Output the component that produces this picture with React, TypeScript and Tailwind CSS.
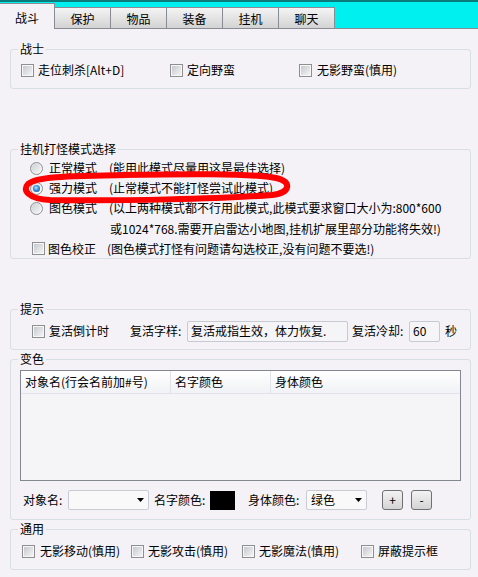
import React from 'react';

function CheckBox() {
  return (
    <span className="flex h-[13px] w-[13px] shrink-0 items-center justify-center border border-[#8e8f8f] bg-[#f7f7f7]">
      <span className="h-[9px] w-[9px] bg-linear-to-br from-[#c6c9ce] to-[#f4f4f4]" />
    </span>
  );
}

function Radio({ checked = false }: { checked?: boolean }) {
  return (
    <span className="flex h-[13px] w-[13px] shrink-0 items-center justify-center rounded-full border border-[#8e8f8f] bg-linear-to-br from-[#d9dadc] to-[#ffffff]">
      {checked ? (
        <span className="h-[7px] w-[7px] rounded-full bg-[radial-gradient(circle_at_45%_40%,#b8e4ff_0%,#3d8fd8_45%,#133e73_100%)]" />
      ) : (
        <span className="h-[9px] w-[9px] rounded-full bg-linear-to-br from-[#cfd1d4] to-[#f7f7f7]" />
      )}
    </span>
  );
}

function Tab({ label }: { label: string }) {
  return (
    <div className="flex h-[21px] w-[56px] items-center justify-center border-t border-r border-[#898c95] bg-linear-to-b from-[#f4f4f4] to-[#d3d3d3] pt-px">
      {label}
    </div>
  );
}

function Group({ title, className, children }: { title: string; className: string; children: React.ReactNode }) {
  return (
    <fieldset className={`ml-[10px] w-[461px] rounded-[3px] border border-[#d5dfe5] ${className}`}>
      <legend className="ml-[7px] px-[2px] leading-[16px]">{title}</legend>
      {children}
    </fieldset>
  );
}

function Combo({ w, value }: { w: string; value?: string }) {
  return (
    <div className={`flex h-[20px] ${w} items-center justify-between rounded-[2px] border border-[#c9ccd2] bg-[#f9f9fa] pl-[4px] pr-[4px]`}>
      <span>{value}</span>
      <svg width="7" height="4" viewBox="0 0 7 4">
        <path d="M0 0h7L3.5 4z" fill="#000" />
      </svg>
    </div>
  );
}

function SmallButton({ label }: { label: string }) {
  return (
    <div className="flex h-[20px] w-[21px] items-center justify-center rounded-[3px] border border-[#707070] bg-linear-to-b from-[#f3f3f3] to-[#d4d4d4]">
      {label}
    </div>
  );
}

export default function App() {
  return (
    <div className="relative h-[577px] w-[478px] overflow-hidden bg-[#f4f2f6] font-['Noto_Sans_CJK_SC',sans-serif] text-[12px] leading-[16px] text-black">
      <div className="flex h-[29px] items-end border-t-2 border-b border-t-[#0b7b7b] border-b-[#898c95] bg-[#00f0f0]">
        <div className="relative z-10 -mb-px flex h-[26px] w-[55px] items-center justify-center border-t border-r border-[#898c95] bg-[#f4f2f6] pt-[2px]">
          战斗
        </div>
        <Tab label="保护" />
        <Tab label="物品" />
        <Tab label="装备" />
        <Tab label="挂机" />
        <Tab label="聊天" />
      </div>

      <Group title="战士" className="mt-[12px] h-[48px]">
        <div className="flex h-[20px] items-center pl-[10px] mt-[3px]">
          <div className="flex w-[149px] items-center gap-[4px]">
            <CheckBox />
            <span>走位刺杀[Alt+D]</span>
          </div>
          <div className="flex w-[129px] items-center gap-[4px]">
            <CheckBox />
            <span>定向野蛮</span>
          </div>
          <div className="flex items-center gap-[5px]">
            <CheckBox />
            <span>无影野蛮(慎用)</span>
          </div>
        </div>
      </Group>

      <Group title="挂机打怪模式选择" className="mt-[52px] h-[118px]">
        <div className="pt-px">
          <div className="flex h-[20px] items-center pl-[19px]">
            <Radio />
            <span className="ml-[6px] w-[60px]">正常模式</span>
            <span>(能用此模式尽量用这是最佳选择)</span>
          </div>
          <div className="flex h-[20px] items-center pl-[19px]">
            <Radio checked />
            <span className="ml-[6px] w-[60px]">强力模式</span>
            <span>(止常模式不能打怪尝试此模式)</span>
          </div>
          <div className="flex h-[20px] items-center pl-[19px]">
            <Radio />
            <span className="ml-[6px] w-[60px]">图色模式</span>
            <span>(以上两种模式都不行用此模式,此模式要求窗口大小为:800*600</span>
          </div>
          <div className="flex h-[21px] items-center pl-[99px]">
            或1024*768.需要开启雷达小地图,挂机扩展里部分功能将失效!)
          </div>
          <div className="flex h-[19px] items-center pl-[21px]">
            <CheckBox />
            <span className="ml-[3px] w-[59px]">图色校正</span>
            <span>(图色模式打怪有问题请勾选校正,没有问题不要选!)</span>
          </div>
        </div>
      </Group>

      <Group title="提示" className="mt-[42px] h-[49px]">
        <div className="mt-[3px] flex h-[22px] items-center pl-[21px]">
          <CheckBox />
          <span className="ml-[4px]">复活倒计时</span>
          <span className="ml-[21px] w-[57px]">复活字样:</span>
          <div className="flex h-[21px] w-[161px] items-center rounded-[2px] border border-[#c6cad2] bg-[#f5f4f7] pl-[3px]">
            复活戒指生效，体力恢复.
          </div>
          <span className="ml-[4px] w-[57px]">复活冷却:</span>
          <div className="flex h-[21px] w-[31px] items-center rounded-[2px] border border-[#c6cad2] bg-[#f5f4f7] pl-[3px]">
            60
          </div>
          <span className="ml-[5px]">秒</span>
        </div>
      </Group>

      <Group title="变色" className="mt-[1px] h-[169px]">
        <div className="ml-[9px] mt-[3px] h-[111px] w-[441px] border border-[#828790] bg-[#f5f4f7]">
          <div className="flex h-[23px] border-b border-[#e2e3ea] bg-linear-to-b from-[#ffffff] to-[#f1f2f6]">
            <div className="flex w-[150px] items-center border-r border-[#e2e3ea] pl-[4px]">对象名(行会名前加#号)</div>
            <div className="flex w-[100px] items-center border-r border-[#e2e3ea] pl-[4px]">名字颜色</div>
            <div className="flex flex-1 items-center pl-[4px]">身体颜色</div>
          </div>
        </div>
        <div className="mt-[8px] flex h-[22px] items-center pl-[12px]">
          <span className="w-[45px]">对象名:</span>
          <Combo w="w-[81px]" />
          <span className="ml-[5px] w-[56px]">名字颜色:</span>
          <div className="h-[19px] w-[25px] bg-black" />
          <span className="ml-[13px] w-[58px]">身体颜色:</span>
          <Combo w="w-[61px]" value="绿色" />
          <div className="ml-[15px]">
            <SmallButton label="+" />
          </div>
          <div className="ml-[8px]">
            <SmallButton label="-" />
          </div>
        </div>
      </Group>

      <Group title="通用" className="mt-[1px] h-[49px]">
        <div className="mt-[4px] flex h-[20px] items-center pl-[11px]">
          <div className="flex w-[109px] items-center gap-[5px]">
            <CheckBox />
            <span>无影移动(慎用)</span>
          </div>
          <div className="flex w-[111px] items-center gap-[4px]">
            <CheckBox />
            <span>无影攻击(慎用)</span>
          </div>
          <div className="flex w-[119px] items-center gap-[4px]">
            <CheckBox />
            <span>无影魔法(慎用)</span>
          </div>
          <div className="flex items-center gap-[4px]">
            <CheckBox />
            <span>屏蔽提示框</span>
          </div>
        </div>
      </Group>

      {/* hand-drawn red marker over the 强力模式 row */}
      <svg className="pointer-events-none absolute inset-0" width="478" height="577" viewBox="0 0 478 577">
        <path
          d="M120 175 C180 174 250 173 276 178 C292 181 291 193 272 195 C220 199 120 201 50 200 C28 199 22 190 28 184 C36 177 60 176 130 175"
          fill="none"
          stroke="#ff0000"
          strokeWidth="6"
          strokeLinecap="round"
        />
      </svg>
    </div>
  );
}
